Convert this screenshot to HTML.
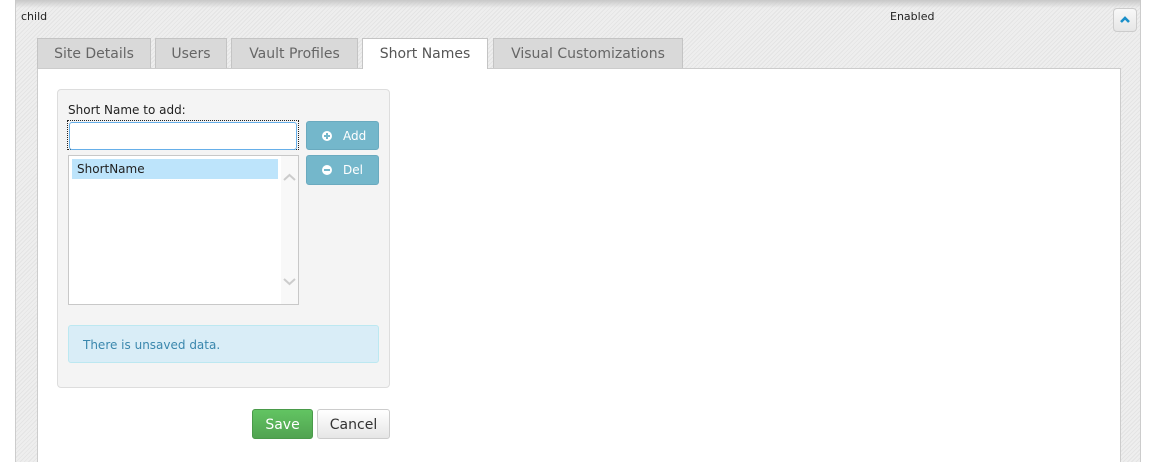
<!DOCTYPE html>
<html style="width:1161px;height:462px;overflow:hidden"><head><style>
html,body{margin:0;width:1161px;height:462px;overflow:hidden}
body{background:#fff;font-family:"DejaVu Sans",Verdana,sans-serif;position:relative}
.outer{position:absolute;left:15px;top:0;width:1126px;height:462px;border-left:1px solid #ccc;border-right:1px solid #ccc;box-sizing:border-box;
background:repeating-linear-gradient(135deg,#eeeeee 0 2px,#e4e4e4 2px 3px)}
.shadow{position:absolute;left:15px;top:0;width:1126px;height:8px;background:linear-gradient(#c8c8c8,rgba(230,230,230,0))}
.a{position:absolute}
.tab{position:absolute;top:38px;height:30px;background:#d9d9d9;border:1px solid #c4c4c4;border-bottom:none;box-sizing:border-box;font-size:14px;color:#666;text-align:center;line-height:31px}
.panel{position:absolute;left:37px;top:68px;width:1084px;height:394px;background:#fff;border:1px solid #ccc;border-bottom:none;box-sizing:border-box}
.btn{position:absolute;background:#74b7cb;border:1px solid #6aaabf;border-radius:3px;color:#fff;font-size:12px;box-sizing:border-box;line-height:28px}
.ic{display:inline-block;width:10px;height:10px;border-radius:50%;background:#fff;position:relative;vertical-align:-1px;margin:0 11px 0 15px}
</style></head><body>
<div class="outer"></div><div class="shadow"></div>
<div class="a" style="left:21px;top:10px;font-size:11px;color:#222">child</div>
<div class="a" style="left:890px;top:10px;font-size:11px;color:#222">Enabled</div>
<div class="a" style="left:1113px;top:8px;width:24px;height:24px;border:1px solid #ccc;border-radius:4px;background:linear-gradient(#f8f8f8,#e6e6e6);box-sizing:border-box">
<svg width="22" height="22" style="position:absolute;left:0;top:0"><path d="M7 13 L11 9 L15 13" stroke="#1a8fc9" stroke-width="2.6" fill="none"/></svg></div>
<div class="panel"></div>
<div class="tab" style="left:37px;width:114px">Site Details</div>
<div class="tab" style="left:155px;width:72px">Users</div>
<div class="tab" style="left:231px;width:127px">Vault Profiles</div>
<div class="tab" style="left:362px;width:126px;background:#fff;height:31px;color:#555;z-index:2">Short Names</div>
<div class="tab" style="left:493px;width:190px">Visual Customizations</div>
<div class="a" style="left:57px;top:89px;width:333px;height:299px;background:#f4f4f4;border:1px solid #ddd;border-radius:4px;box-sizing:border-box"></div>
<div class="a" style="left:68px;top:103px;font-size:12px;color:#222">Short Name to add:</div>
<div class="a" style="left:67px;top:120px;width:232px;height:30px;border:1px dotted #222;box-sizing:border-box"><div style="margin:1px;height:26px;border:1px solid #66afe9;border-radius:3px;background:#fff"></div></div>
<div class="btn" style="left:306px;top:121px;width:73px;height:29px"><span class="ic"><span style="position:absolute;left:2px;top:4px;width:6px;height:2px;background:#74b7cb"></span><span style="position:absolute;left:4px;top:2px;width:2px;height:6px;background:#74b7cb"></span></span>Add</div>
<div class="a" style="left:68px;top:155px;width:231px;height:150px;border:1px solid #c8c8c8;background:#fff;box-sizing:border-box">
<div style="position:absolute;left:3px;top:3px;width:206px;height:20px;background:#bde4fb;font-size:12px;line-height:21px;padding-left:5px;box-sizing:border-box;color:#222">ShortName</div>
<div style="position:absolute;right:0;top:0;width:17px;height:148px;background:#f8f8f8"></div>
<svg style="position:absolute;right:2px;top:17px" width="13" height="8"><path d="M1 7 L6.5 2 L12 7" stroke="#ccc" stroke-width="2" fill="none"/></svg>
<svg style="position:absolute;right:2px;top:122px" width="13" height="8"><path d="M1 1 L6.5 6 L12 1" stroke="#ccc" stroke-width="2" fill="none"/></svg>
</div>
<div class="btn" style="left:306px;top:155px;width:73px;height:30px"><span class="ic"><span style="position:absolute;left:2px;top:4px;width:6px;height:2px;background:#74b7cb"></span></span>Del</div>
<div class="a" style="left:68px;top:325px;width:311px;height:38px;background:#d9edf7;border:1px solid #bce8f1;border-radius:3px;box-sizing:border-box;color:#3a87ad;font-size:12px;line-height:38px;padding-left:14px">There is unsaved data.</div>
<div class="a" style="left:252px;top:409px;width:61px;height:30px;background:linear-gradient(#62c462,#51a351);border:1px solid #4a9a4a;border-radius:3px;box-sizing:border-box;color:#fff;font-size:14px;text-align:center;line-height:30px">Save</div>
<div class="a" style="left:317px;top:409px;width:73px;height:30px;background:linear-gradient(#fff,#e6e6e6);border:1px solid #ccc;border-radius:3px;box-sizing:border-box;color:#333;font-size:14px;text-align:center;line-height:30px">Cancel</div>
</body></html>
